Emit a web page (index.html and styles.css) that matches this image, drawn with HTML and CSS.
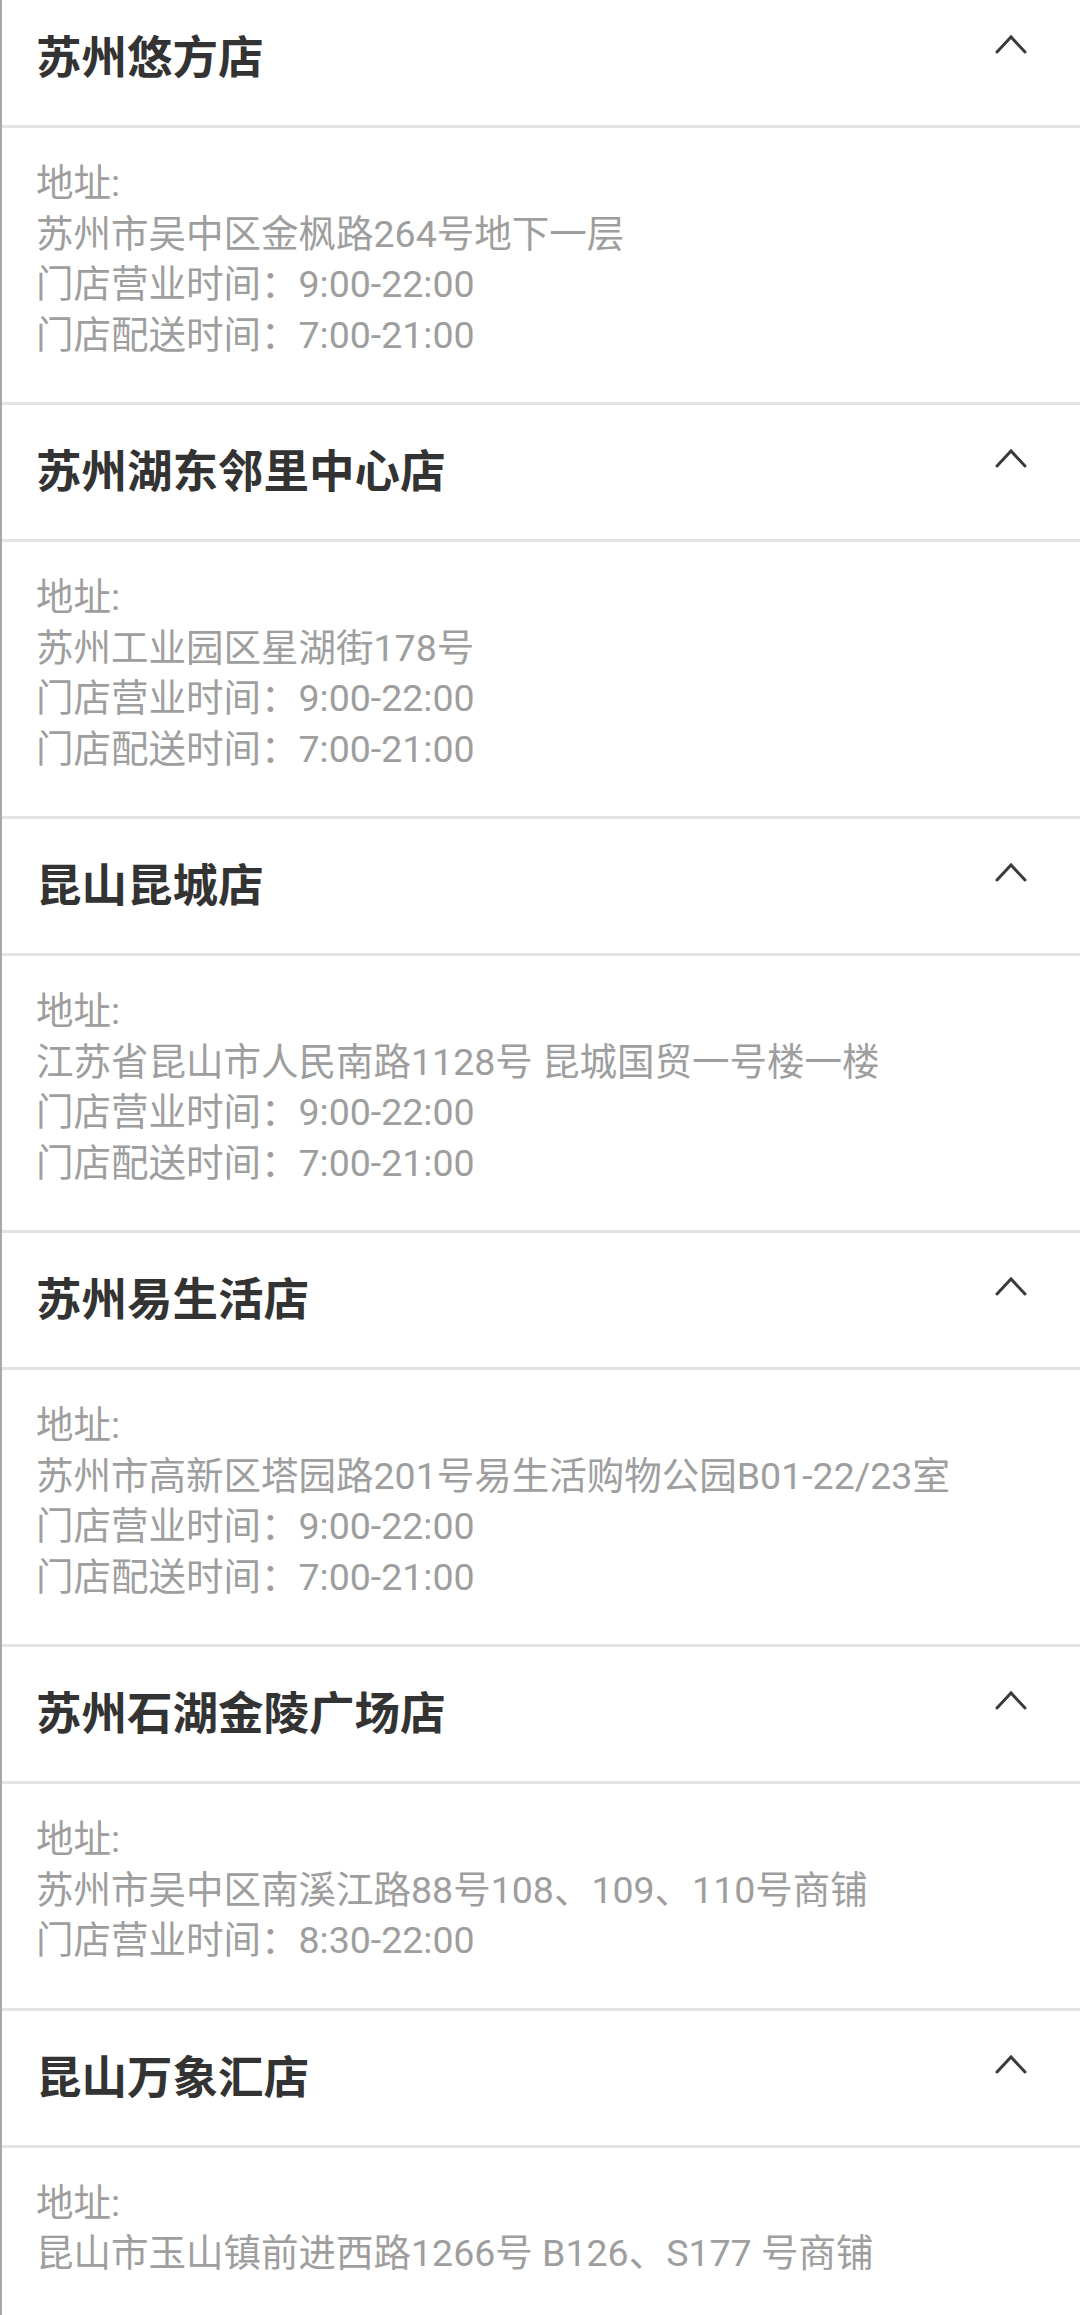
FILE: index.html
```html
<!DOCTYPE html>
<html lang="zh-CN">
<head>
  <meta charset="UTF-8">
  <meta name="viewport" content="width=device-width, initial-scale=1.0">
  <title>门店列表</title>
  <link rel="stylesheet" href="styles.css">
</head>
<body>
  <div class="stores">
    <div class="store">
      <div class="store-head">
        <div class="store-name">苏州悠方店</div>
        <svg class="arrow" width="32" height="22" viewBox="0 0 32 22"><polyline points="2,19 16,4 30,19" /></svg>
      </div>
      <div class="store-body">
        <div>地址:</div>
        <div>苏州市吴中区金枫路264号地下一层</div>
        <div>门店营业时间：9:00-22:00</div>
        <div>门店配送时间：7:00-21:00</div>
      </div>
    </div>

    <div class="store">
      <div class="store-head">
        <div class="store-name">苏州湖东邻里中心店</div>
        <svg class="arrow" width="32" height="22" viewBox="0 0 32 22"><polyline points="2,19 16,4 30,19" /></svg>
      </div>
      <div class="store-body">
        <div>地址:</div>
        <div>苏州工业园区星湖街178号</div>
        <div>门店营业时间：9:00-22:00</div>
        <div>门店配送时间：7:00-21:00</div>
      </div>
    </div>

    <div class="store">
      <div class="store-head">
        <div class="store-name">昆山昆城店</div>
        <svg class="arrow" width="32" height="22" viewBox="0 0 32 22"><polyline points="2,19 16,4 30,19" /></svg>
      </div>
      <div class="store-body">
        <div>地址:</div>
        <div>江苏省昆山市人民南路1128号 昆城国贸一号楼一楼</div>
        <div>门店营业时间：9:00-22:00</div>
        <div>门店配送时间：7:00-21:00</div>
      </div>
    </div>

    <div class="store">
      <div class="store-head">
        <div class="store-name">苏州易生活店</div>
        <svg class="arrow" width="32" height="22" viewBox="0 0 32 22"><polyline points="2,19 16,4 30,19" /></svg>
      </div>
      <div class="store-body">
        <div>地址:</div>
        <div>苏州市高新区塔园路201号易生活购物公园B01-22/23室</div>
        <div>门店营业时间：9:00-22:00</div>
        <div>门店配送时间：7:00-21:00</div>
      </div>
    </div>

    <div class="store">
      <div class="store-head">
        <div class="store-name">苏州石湖金陵广场店</div>
        <svg class="arrow" width="32" height="22" viewBox="0 0 32 22"><polyline points="2,19 16,4 30,19" /></svg>
      </div>
      <div class="store-body">
        <div>地址:</div>
        <div>苏州市吴中区南溪江路88号108、109、110号商铺</div>
        <div>门店营业时间：8:30-22:00</div>
      </div>
    </div>

    <div class="store">
      <div class="store-head">
        <div class="store-name">昆山万象汇店</div>
        <svg class="arrow" width="32" height="22" viewBox="0 0 32 22"><polyline points="2,19 16,4 30,19" /></svg>
      </div>
      <div class="store-body">
        <div>地址:</div>
        <div>昆山市玉山镇前进西路1266号 B126、S177 号商铺</div>
      </div>
    </div>
  </div>
</body>
</html>
```

FILE: styles.css
```css
html, body {
  margin: 0;
  padding: 0;
  background: #fff;
}
body {
  font-family: Roboto, "Noto Sans CJK SC", sans-serif;
  border-left: 2px solid #a8a8a8;
  min-height: 2315px;
  box-sizing: border-box;
  overflow: hidden;
}
.stores {
  margin-top: -9px;
}
.store-head {
  display: flex;
  justify-content: space-between;
  align-items: flex-start;
  height: 134px;
  padding: 0 53px 0 34px;
  border-bottom: 3px solid #e3e3e3;
}
.store-name {
  margin-top: 33px;
  font-size: 45.5px;
  line-height: 60px;
  font-weight: bold;
  color: #333;
  font-family: "Noto Sans CJK SC", sans-serif;
}
.arrow {
  margin-top: 42px;
}
.arrow polyline {
  fill: none;
  stroke: #3a3a3a;
  stroke-width: 3;
  stroke-linecap: round;
  stroke-linejoin: miter;
}
.store-body {
  padding: 30px 34px 42px;
  font-size: 37.5px;
  line-height: 50.5px;
  color: #9e9e9e;
  border-bottom: 3px solid #e3e3e3;
}
```
